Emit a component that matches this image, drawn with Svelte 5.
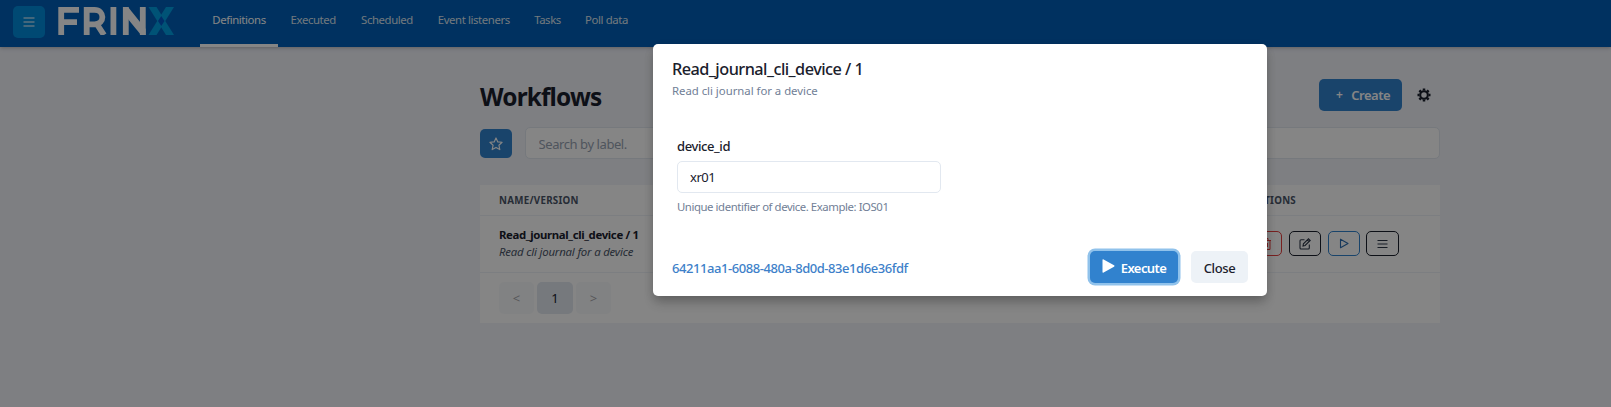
<script>
  const tabs = [
    { label: 'Definitions', width: 78 },
    { label: 'Executed', width: 70.5 },
    { label: 'Scheduled', width: 77 },
    { label: 'Event listeners', width: 96.5 },
    { label: 'Tasks', width: 51 },
    { label: 'Poll data', width: 67 }
  ];
  let deviceId = $state('xr01');
</script>

<div class="page">
  <header>
    <button class="menu" aria-label="Menu">
      <svg width="12" height="10" viewBox="0 0 12 10" stroke="currentColor" stroke-width="1.1"><path d="M.5 1h11M.5 5h11M.5 9h11" /></svg>
    </button>
    <svg class="logo" width="116" height="28" viewBox="0 0 116 28" fill="none">
      <g stroke="#fff" stroke-width="5.8">
        <path d="M3.2 28V2.9H21M3.2 15.2H19" />
        <path d="M28.7 28V2.9H36.5C47 2.9 47 17.3 36.5 17.3H29M38.5 16.5L46 28" />
        <path d="M55.4 0V28" />
        <path d="M67.8 28V0M84.8 28V0" />
      </g>
      <path d="M65 0H70L87.7 22V28H83L65 6Z" fill="#fff" />
      <path d="M90.5 0H98.5L116 28H108Z" fill="#009fe3" />
      <path d="M108 0H116L98.5 28H90.5Z" fill="#009fe3" />
      <path d="M103.25 9L106.500 14L103.25 19L100 14Z" fill="#0057c8" />
    </svg>
    <nav>
      {#each tabs as tab, i}
        <a class:active={i === 0} style:width="{tab.width}px" href="#top">{tab.label}</a>
      {/each}
    </nav>
  </header>

  <main>
    <div class="heading">
      <h1>Workflows</h1>
      <button class="create"><span class="plus">+</span><span>Create</span></button>
      <svg class="gear" width="14" height="14" viewBox="0 0 14 14" fill="none" stroke="currentColor">
        <circle cx="7" cy="7" r="3.8" stroke-width="2.1" />
        <path stroke-width="2.5" d="M7 .5v2M7 11.5v2M.5 7h2M11.5 7h2M2.4 2.4l1.4 1.4M10.2 10.2l1.4 1.4M2.4 11.6l1.4-1.4M10.2 3.8l1.4-1.4" />
      </svg>
    </div>

    <div class="filters">
      <button class="star" aria-label="Favorites">
        <svg width="14" height="14" viewBox="0 0 14 14" fill="none" stroke="currentColor" stroke-width="1.15" stroke-linejoin="round"><path d="M7 .9l1.800 4 4.300.4-3.200 2.900.9 4.400L7 10.400l-3.800 2.200.9-4.400L.9 5.300l4.300-.4z" /></svg>
      </button>
      <input class="search" placeholder="Search by label." />
    </div>

    <section class="table">
      <div class="thead"><span>Name/Version</span><span class="actions-label">Actions</span></div>
      <div class="row">
        <div class="workflow">
          <strong>Read_journal_cli_device / 1</strong>
          <em>Read cli journal for a device</em>
        </div>
        <div class="actions">
          <button class="red" aria-label="Delete">
            <svg width="12" height="12" viewBox="0 0 12 12" fill="none" stroke="currentColor"><path d="M1 2.500h10M4 2.500v-2h4v2M2 2.500v9h8v-9M4.500 5v4M7.500 5v4" /></svg>
          </button>
          <button aria-label="Edit">
            <svg width="12" height="12" viewBox="0 0 12 12" fill="none" stroke="currentColor" stroke-width="1.1"><path d="M5.500 1.700H2Q1 1.700 1 2.700V10Q1 11 2 11H9.300Q10.300 11 10.300 10V6.500M4 8l.4-2.200L9.500.8l1.700 1.700-5.100 5zM8.300 2l1.700 1.700" /></svg>
          </button>
          <button class="blue" aria-label="Execute">
            <svg width="10" height="11" viewBox="0 0 10 11" fill="none" stroke="currentColor" stroke-width="1.1" stroke-linejoin="round"><path d="M1.500 1.200v8.600L9 5.500z" /></svg>
          </button>
          <button aria-label="More">
            <svg width="11" height="10" viewBox="0 0 11 10" stroke="currentColor" stroke-width="1.1"><path d="M.5 1.500h10M.5 5h10M.5 8.500h10" /></svg>
          </button>
        </div>
      </div>
      <div class="pagination">
        <button class="faded">&lt;</button>
        <button class="current">1</button>
        <button class="faded">&gt;</button>
      </div>
    </section>
  </main>

  <div class="overlay">
    <div class="modal" role="dialog">
      <h2>Read_journal_cli_device / 1</h2>
      <p class="description">Read cli journal for a device</p>
      <div class="field">
        <label for="device">device_id</label>
        <input id="device" bind:value={deviceId} />
        <p>Unique identifier of device. Example: IOS01</p>
      </div>
      <footer>
        <a href="#execution">64211aa1-6088-480a-8d0d-83e1d6e36fdf</a>
        <button class="execute">
          <svg width="13" height="14" viewBox="0 0 13 14" fill="currentColor"><path d="M.5 1Q.5-.2 1.600.4L12 6.300Q13 7 12 7.700L1.600 13.600Q.5 14.200.5 13z" /></svg>
          <span>Execute</span>
        </button>
        <button class="close"><span>Close</span></button>
      </footer>
    </div>
  </div>
</div>

<style>
  :global(body) { background: #edf2f7; overflow: hidden; }
  .page, .page * { box-sizing: border-box; }
  .page {
    height: 407px;
    background: #f1f3fa;
    color: #1a202c;
    font: 13px/19.5px "Noto Sans", "Open Sans", sans-serif;
  }
  button, input { font: inherit; border: 0; margin: 0; padding: 0; color: inherit; outline: 0; }
  button { display: flex; align-items: center; justify-content: center; border-radius: 5px; background: none; }
  h1, h2, p { margin: 0; }
  a { text-decoration: none; }
  svg { display: block; flex: none; }

  header {
    display: flex;
    height: 47px;
    padding-left: 13px;
    background: #005fb8;
    box-shadow: 0 1px 4px rgba(0, 0, 0, .25);
    position: relative;
  }
  .menu { width: 32px; height: 32px; margin-top: 6px; background: #008ddc; color: #fff; }
  .logo { margin: 7px 26px 0 13px; }
  nav { display: flex; }
  nav a {
    display: flex;
    justify-content: center;
    height: 47px;
    padding-top: 10px;
    border-bottom: 3px solid transparent;
    color: #dce6f0;
    font-size: 11.375px;
    letter-spacing: -.4px;
    white-space: nowrap;
  }
  nav a.active { border-color: #fff; color: #fff; }

  main { width: 960px; margin-left: 480px; }
  .heading { display: flex; align-items: center; height: 32px; margin-top: 32px; }
  h1 { flex: 1; padding-top: 3px; font-size: 24.4px; line-height: 32px; font-weight: 700; letter-spacing: -.85px; }
  .create { width: 83px; height: 32px; padding: 2px 0 0 5px; background: #3182ce; color: #fff; font-weight: 600; gap: 9px; letter-spacing: -.5px; }
  .plus { font-size: 12px; line-height: 16px; margin-bottom: 2px; }
  .gear { margin: 0 9px 0 15px; }

  .filters { display: flex; align-items: center; gap: 13px; height: 32px; margin-top: 16px; }
  .star { width: 32px; height: 29px; margin-top: 1px; background: #3182ce; color: #fff; }
  .search { flex: 1; height: 32px; padding: 1px 12px 0 12.5px; border: 1px solid #e2e8f0; border-radius: 5px; background: #fff; letter-spacing: -.42px; }
  .search::placeholder { color: #98a3b3; opacity: 1; }

  .table { height: 138px; margin-top: 26px; background: #fff; }
  .thead {
    display: flex;
    justify-content: space-between;
    height: 31px;
    padding: 0 144px 0 19px;
    border-bottom: 1px solid #edf2f7;
    color: #4a5568;
    font-size: 9.75px;
    line-height: 31px;
    font-weight: 700;
    text-transform: uppercase;
    letter-spacing: .28px;
  }
  .row { display: flex; justify-content: space-between; height: 57px; padding: 0 41px 0 19px; border-bottom: 1px solid #edf2f7; }
  .workflow { display: flex; flex-direction: column; padding-top: 10px; font-size: 11.375px; line-height: 17px; }
  .workflow strong { letter-spacing: -.34px; }
  .workflow em { color: #4a5568; letter-spacing: -.18px; }
  .actions { display: flex; gap: 7px; padding-top: 15px; }
  .actions button { width: 32px; height: 25px; border: 1px solid #1a202c; color: #2d3748; }
  .actions button:last-child { width: 33px; margin-left: -1px; }
  .actions .red { border-color: #e53e3e; color: #e53e3e; }
  .actions .blue { border-color: #3182ce; color: #2b6cb0; }
  .pagination { display: flex; gap: 3px; padding: 9px 19px; }
  .pagination button { width: 35px; height: 32px; padding-top: 2px; background: #edf2f7; }
  .pagination .current { width: 36px; background: #e2e8f0; }
  .pagination .faded { opacity: .4; }

  .overlay { position: absolute; inset: 0; display: flex; align-items: flex-start; padding: 44px 0 0 653px; background: rgba(0, 0, 0, .48); }
  .modal {
    display: flex;
    flex-direction: column;
    width: 614px;
    height: 252px;
    padding: 13px 19px;
    border-radius: 5px;
    background: #fff;
    box-shadow: 0 8px 12px -2px rgba(0, 0, 0, .2), 0 3px 8px rgba(0, 0, 0, .12);
  }
  h2 { font-size: 16.25px; line-height: 24px; font-weight: 500; letter-spacing: -.53px; }
  .description { color: #718096; font-size: 11.375px; line-height: 19px; letter-spacing: -.02px; }
  .field { width: 264px; margin: 36px 0 0 5px; }
  .field label { display: block; height: 20px; margin-bottom: 5px; font-weight: 500; line-height: 20px; letter-spacing: -.4px; }
  .field input { display: block; width: 264px; height: 32px; padding: 0 12px; border: 1px solid #e2e8f0; border-radius: 5px; letter-spacing: -.5px; }
  .field p { margin-top: 5px; color: #718096; font-size: 11.375px; line-height: 17px; letter-spacing: -.43px; white-space: nowrap; }
  footer { display: flex; align-items: center; height: 32px; margin-top: 36px; }
  footer a { margin-right: auto; color: #3d7fc9; font-weight: 500; letter-spacing: -.44px; padding-top: 3px; }
  .execute { width: 88px; height: 32px; gap: 6px; background: #3182ce; color: #fff; font-weight: 600; letter-spacing: -.6px; box-shadow: 0 0 0 2.5px #90c2eb; }
  .execute svg { margin-bottom: 3px; }
  .execute span, .close span { padding-top: 3px; }
  .close { width: 57px; height: 32px; margin-left: 13px; background: #edf2f7; font-weight: 500; letter-spacing: -.4px; }
</style>
